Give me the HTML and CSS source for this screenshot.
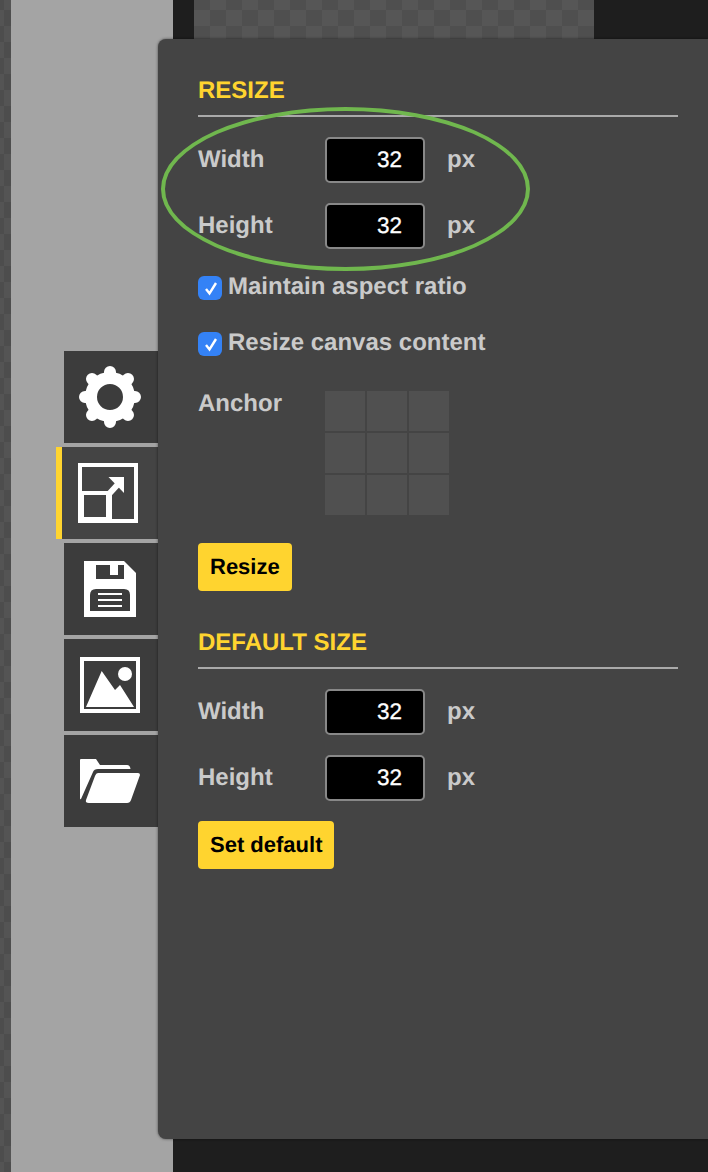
FILE: index.html
```html
<!DOCTYPE html>
<html lang="en">
<head>
<meta charset="utf-8">
<title>Resize</title>
<link rel="stylesheet" href="styles.css">
</head>
<body>
<div class="app">
  <div class="edge"></div>
  <div class="side"></div>
  <div class="stage"><div class="canvas"></div></div>
  <div class="tabs">
    <div class="tab">
      <svg width="62" height="62" viewBox="0 0 62 62"><circle cx="31" cy="31" r="19" fill="none" stroke="#fff" stroke-width="12"/><path d="M31 6V10M31 52v4M6 31H10M52 31h4M13 13l3 3M46 46l3 3M49 13l-3 3M16 46l-3 3" stroke="#fff" stroke-width="12" stroke-linecap="round"/></svg>
    </div>
    <div class="tab on">
      <svg width="60" height="60" viewBox="0 0 60 60"><rect x="2" y="2" width="56" height="56" fill="none" stroke="#fff" stroke-width="4"/><rect x="0" y="28" width="34" height="32" fill="#fff"/><rect x="6" y="32" width="22" height="22" fill="#444"/><path d="M31 31 42 19" fill="none" stroke="#fff" stroke-width="6"/><path d="M30.500 14H46V30Z" fill="#fff"/></svg>
    </div>
    <div class="tab">
      <svg width="52" height="56" viewBox="0 0 52 56"><path d="M0 0H40L52 12V56H0Z" fill="#fff"/><path d="M12 4H40V18H12Z" fill="#3c3c3c"/><path d="M26 4H34V14H26Z" fill="#fff"/><path d="M12 28Q6 28 6 34V50H46V34Q46 28 40 28Z" fill="#3c3c3c"/><path d="M14 33H38M14 39H38M14 45H38" stroke="#fff" stroke-width="2"/></svg>
    </div>
    <div class="tab">
      <svg width="60" height="56" viewBox="0 0 60 56"><rect x="2" y="2" width="56" height="52" fill="none" stroke="#fff" stroke-width="4"/><circle cx="45" cy="17" r="7" fill="#fff"/><path d="M6 50 21.700 14 35 33 40 28 54 50Z" fill="#fff"/></svg>
    </div>
    <div class="tab">
      <svg width="60" height="44" viewBox="0 0 60 44"><path d="M0 1Q0 0 1 0H16L20 6H47Q50 6 50.500 10H18Q14 10 13 13L1 40Q0 41 0 39Z" fill="#fff"/><path d="M18 14H58Q60 14 60 16L51 41Q50 44 47 44H9Q5 44 6 41L15 17Q16 14 18 14Z" fill="#fff"/></svg>
    </div>
  </div>
  <main class="panel">
    <section>
      <h2 class="title">RESIZE</h2>
      <div class="row"><span class="lab">Width</span><span class="inp">32</span><span class="unit">px</span></div>
      <div class="row"><span class="lab">Height</span><span class="inp">32</span><span class="unit">px</span></div>
      <div class="chk"><span class="box"><svg width="24" height="24" viewBox="0 0 24 24"><path d="M8 13 11.500 17.500 18 7" fill="none" stroke="#fff" stroke-width="2.400"/></svg></span>Maintain aspect ratio</div>
      <div class="chk"><span class="box"><svg width="24" height="24" viewBox="0 0 24 24"><path d="M8 13 11.500 17.500 18 7" fill="none" stroke="#fff" stroke-width="2.400"/></svg></span>Resize canvas content</div>
      <div class="anchor">
        <span class="lab">Anchor</span>
        <div class="grid"><i></i><i></i><i></i><i></i><i></i><i></i><i></i><i></i><i></i></div>
      </div>
      <div class="btn wide">Resize</div>
    </section>
    <section>
      <h2 class="title">DEFAULT SIZE</h2>
      <div class="row"><span class="lab">Width</span><span class="inp">32</span><span class="unit">px</span></div>
      <div class="row"><span class="lab">Height</span><span class="inp">32</span><span class="unit">px</span></div>
      <div class="btn">Set default</div>
    </section>
    <div class="ring"></div>
  </main>
</div>
</body>
</html>
```
FILE: styles.css
```css
* { box-sizing: border-box; }
html, body { margin: 0; height: 100%; }
body { font-family: "Liberation Sans", Arial, sans-serif; background: #1e1e1e; overflow: hidden; text-rendering: geometricPrecision; }
.app { position: relative; display: flex; width: 708px; height: 1172px; }
.edge { width: 11px; background: repeating-conic-gradient(#545454 0 25%, #4d4d4d 0 50%) -12px -6px / 32px 32px; }
.side { width: 162px; background: #a4a4a4; }
.stage { flex: 1; padding-left: 21px; background: #1e1e1e; }
.canvas { width: 400px; height: 39px; background: repeating-conic-gradient(#565656 0 25%, #4f4f4f 0 50%) 0 -6px / 32px 32px; }
.tabs { position: absolute; left: 56px; top: 351px; width: 102px; display: flex; flex-direction: column; gap: 4px; }
.tab { margin-left: 8px; height: 92px; background: #3c3c3c; display: flex; align-items: center; justify-content: center; padding-right: 2px; }
.tab.on { margin-left: 0; background: #444; border-left: 6px solid #ffd42f; padding-right: 4px; }
.panel { position: absolute; left: 158px; top: 39px; width: 550px; height: 1100px; background: #444; border-radius: 8px 0 0 8px; box-shadow: 0 0 3px rgba(0,0,0,.55); padding: 0 30px 0 40px; color: #cacaca; font-weight: 700; }
.title { height: 78px; margin: 0; padding-top: 38px; border-bottom: 2px solid #aaa; font-size: 24px; line-height: 27px; color: #ffd42f; }
.row { display: flex; align-items: center; height: 46px; margin-top: 20px; }
.lab { width: 127px; font-size: 24px; line-height: 28px; }
.inp { width: 100px; height: 46px; border: 2px solid #888; border-radius: 5px; background: #000; color: #fff; font-size: 22.500px; font-weight: 400; line-height: 42px; text-align: right; padding-right: 21px; -webkit-text-stroke: .3px #fff; }
.unit { margin-left: 22px; font-size: 24px; }
.chk { display: flex; align-items: flex-start; height: 28px; font-size: 24px; line-height: 30px; margin-top: 23px; }
.chk + .chk { margin-top: 28px; }
.box { width: 24px; height: 24px; margin: 4px 6px 0 0; border-radius: 6px; background: #3482f6; }
.box svg { display: block; }
.anchor { display: flex; margin-top: 35px; }
.anchor .lab { line-height: 26px; }
.grid { display: grid; grid-template-columns: repeat(3, 40px); grid-auto-rows: 40px; gap: 2px; }
.grid i { background: #505050; }
.btn { display: inline-block; height: 48px; margin-top: 20px; padding: 0 12px; border-radius: 4px; background: #ffd42f; color: #000; font-size: 22px; line-height: 47px; }
.btn.wide { margin-top: 28px; }
.ring { position: absolute; left: 3px; top: 68px; width: 369px; height: 164px; border: 4px solid #70b74e; border-radius: 50%; }
```
